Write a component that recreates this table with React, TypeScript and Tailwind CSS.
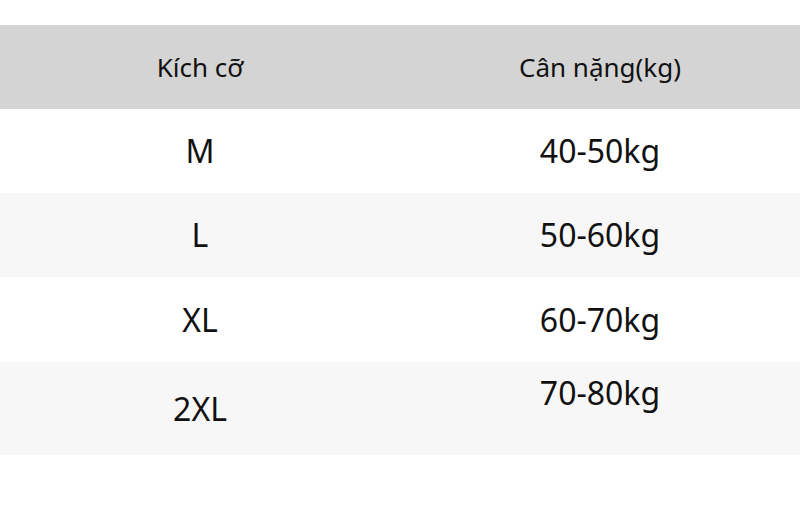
const rows = [
  { size: 'M', weight: '40-50kg', bg: 'bg-white', h: 'h-[84px]', lift: false },
  { size: 'L', weight: '50-60kg', bg: 'bg-[#f7f7f7]', h: 'h-[84px]', lift: false },
  { size: 'XL', weight: '60-70kg', bg: 'bg-white', h: 'h-[85px]', lift: false },
  { size: '2XL', weight: '70-80kg', bg: 'bg-[#f7f7f7]', h: 'h-[93px]', lift: true },
];

export default function App() {
  return (
    <div
      className="h-[521px] w-[800px] bg-white pt-[25px] text-[#111]"
      style={{ fontFamily: '"Noto Sans", "Open Sans", sans-serif' }}
    >
      <div className="grid h-[84px] grid-cols-2 items-center bg-[#d4d4d4] text-[26px]">
        <div className="text-center">Kích cỡ</div>
        <div className="text-center">Cân nặng(kg)</div>
      </div>
      {rows.map((r) => (
        <div key={r.size} className={`grid grid-cols-2 items-center text-[32px] ${r.bg} ${r.h}`}>
          <div className="text-center">{r.size}</div>
          <div className={r.lift ? 'mb-[32px] text-center' : 'text-center'}>{r.weight}</div>
        </div>
      ))}
    </div>
  );
}
